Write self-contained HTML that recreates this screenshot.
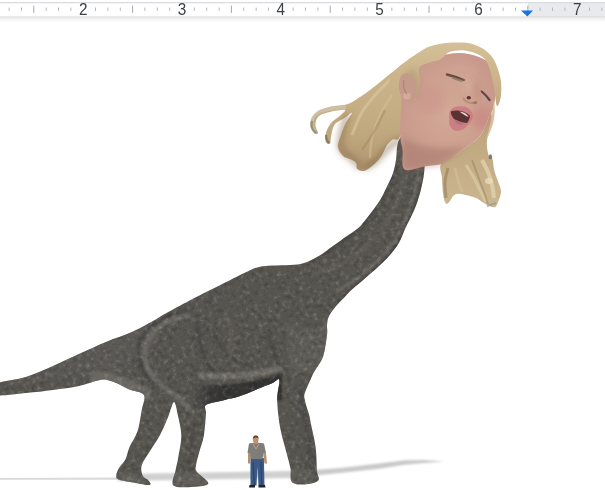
<!DOCTYPE html>
<html><head><meta charset="utf-8"><style>
html,body{margin:0;padding:0;background:#fff;width:605px;height:490px;overflow:hidden}
svg{display:block;font-family:"Liberation Sans",sans-serif}
</style></head><body>
<svg width="605" height="490" viewBox="0 0 605 490">
<defs>
<linearGradient id="dinoG" x1="0" y1="0" x2="0" y2="1">
<stop offset="0" stop-color="#6a6a68"/><stop offset="0.6" stop-color="#5a5a58"/><stop offset="1" stop-color="#4a4a48"/>
</linearGradient>
<linearGradient id="hairLG" x1="0" y1="0" x2="0" y2="1">
<stop offset="0" stop-color="#cdb68e"/><stop offset="0.6" stop-color="#c2aa80"/><stop offset="1" stop-color="#b09670"/>
</linearGradient>
<linearGradient id="shadeG" x1="0" y1="0" x2="0" y2="1">
<stop offset="0" stop-color="#ededed"/><stop offset="1" stop-color="#ffffff"/>
</linearGradient>
<linearGradient id="bellyG" gradientUnits="userSpaceOnUse" x1="192" y1="0" x2="282" y2="0">
<stop offset="0" stop-color="#333231" stop-opacity="0"/><stop offset="0.25" stop-color="#383736" stop-opacity="1"/><stop offset="1" stop-color="#30302f"/>
</linearGradient>
<linearGradient id="hairTG" x1="0" y1="0" x2="0" y2="1">
<stop offset="0" stop-color="#d4c098"/><stop offset="1" stop-color="#c4a880"/>
</linearGradient>
<linearGradient id="hairRG" x1="0" y1="0" x2="0" y2="1">
<stop offset="0" stop-color="#bca27a"/><stop offset="1" stop-color="#cbb690"/>
</linearGradient>
<radialGradient id="faceG" cx="0.5" cy="0.5" r="0.6">
<stop offset="0" stop-color="#d4a996"/><stop offset="1" stop-color="#c6978a"/>
</radialGradient>
<filter id="soft" x="-5%" y="-5%" width="110%" height="110%"><feGaussianBlur stdDeviation="0.6"/></filter>
<filter id="tex" x="0" y="0" width="100%" height="100%">
<feTurbulence type="fractalNoise" baseFrequency="0.22" numOctaves="3" seed="7" result="n"/>
<feColorMatrix in="n" type="matrix" values="0 0 0 0 1  0 0 0 0 1  0 0 0 0 0.98  3 0 0 0 -1.65" result="w"/>
<feColorMatrix in="n" type="matrix" values="0 0 0 0 0  0 0 0 0 0  0 0 0 0 0  -3 0 0 0 1.35" result="b"/>
<feMerge><feMergeNode in="b"/><feMergeNode in="w"/></feMerge>
</filter>
<filter id="blur2" x="-10%" y="-10%" width="120%" height="120%"><feGaussianBlur stdDeviation="1.2"/></filter>
<filter id="blur3" x="-20%" y="-20%" width="140%" height="140%"><feGaussianBlur stdDeviation="0.7"/></filter>
<filter id="blur4" x="-50%" y="-50%" width="200%" height="200%"><feGaussianBlur stdDeviation="3"/></filter>
<filter id="noop"><feColorMatrix type="identity"/></filter>
<filter id="blur1" x="-5%" y="-50%" width="110%" height="200%"><feGaussianBlur stdDeviation="1"/></filter>
</defs>
<g filter="url(#soft)">
<path d="M0 478 L120 477.5 L120 479.8 L0 479.8Z" fill="#d9d9d9"/>
<path d="M118 474 L316 470.5 L316 477.5 L118 481Z" fill="#d0d0d0" filter="url(#blur1)"/>
<path d="M300 471 L340 468 L379 463.5 L405 460.3 L425 460 L444 461.4 L425 463 L405 464.8 L379 468.8 L340 473 L300 477Z" fill="#c9c9c9" filter="url(#blur1)"/>
<clipPath id="dclip"><path d="M-4.0 384.0 C1.0 381.0 16.5 380.0 26.0 377.0 C35.5 374.0 44.2 369.8 53.0 366.0 C61.8 362.2 70.2 358.0 79.0 354.0 C87.8 350.0 97.2 345.7 106.0 342.0 C114.8 338.3 124.2 335.5 132.0 332.0 C139.8 328.5 147.2 324.2 153.0 321.0 C158.8 317.8 159.8 316.7 166.5 313.0 C173.2 309.3 184.2 303.3 193.0 298.7 C201.8 294.1 210.6 289.8 219.4 285.4 C228.2 281.0 239.2 275.3 245.8 272.2 C252.4 269.1 254.6 268.1 259.0 267.0 C263.4 265.9 266.8 265.9 272.0 265.6 C277.2 265.3 284.7 265.4 290.0 265.0 C295.3 264.6 299.2 264.5 304.0 263.0 C308.8 261.5 314.2 258.8 319.0 256.0 C323.8 253.2 328.3 249.3 333.0 246.0 C337.7 242.7 342.8 239.0 347.0 236.0 C351.2 233.0 355.1 231.0 358.4 228.0 C361.7 225.0 364.4 221.3 367.0 218.0 C369.6 214.7 372.0 211.5 374.3 208.4 C376.6 205.3 379.0 201.8 380.6 199.2 C382.2 196.6 382.8 195.1 384.0 192.7 C385.2 190.2 386.7 187.3 388.0 184.5 C389.3 181.7 390.9 178.8 392.0 176.0 C393.1 173.2 393.8 170.7 394.5 168.0 C395.2 165.3 395.2 164.7 396.0 160.0 C396.8 155.3 396.3 145.0 399.0 140.0 C401.7 135.0 407.7 128.3 412.0 130.0 C416.3 131.7 422.9 144.0 425.0 150.0 C427.1 156.0 424.9 161.5 424.7 166.0 C424.4 170.5 424.1 173.2 423.5 177.0 C422.9 180.8 421.7 186.0 421.0 189.0 C420.3 192.0 420.1 192.7 419.4 195.0 C418.7 197.3 417.8 200.3 416.9 203.0 C415.9 205.7 414.9 208.2 413.7 211.0 C412.5 213.8 411.0 216.7 409.6 219.5 C408.2 222.3 407.3 223.8 405.5 227.7 C403.7 231.6 401.6 238.2 398.8 242.9 C396.1 247.6 392.5 251.8 389.0 255.9 C385.5 260.0 381.7 263.5 377.6 267.3 C373.5 271.1 368.6 275.2 364.5 278.8 C360.4 282.4 356.3 285.6 353.0 288.6 C349.7 291.6 347.7 293.8 344.9 296.7 C342.1 299.6 338.6 302.8 336.0 306.0 C333.4 309.2 330.5 312.8 329.0 316.0 C327.5 319.2 327.3 321.8 327.0 325.0 C326.7 328.2 327.7 329.7 327.0 335.0 C326.3 340.3 325.0 350.9 322.9 357.0 C320.8 363.1 316.4 367.6 314.3 371.4 C312.2 375.2 311.6 377.2 310.4 380.0 C309.1 382.8 307.8 385.5 306.8 388.0 C305.8 390.5 304.6 393.0 304.3 395.0 C304.0 397.0 304.4 397.9 304.8 400.0 C305.2 402.1 306.0 405.0 306.8 407.6 C307.6 410.2 308.7 413.0 309.4 415.7 C310.1 418.4 310.0 418.8 311.0 424.0 C312.0 429.2 314.6 439.2 315.6 447.0 C316.6 454.8 316.6 465.4 317.0 471.0 C317.4 476.6 320.3 478.2 318.3 480.5 C316.3 482.8 309.4 484.3 305.0 484.5 C300.6 484.7 294.2 484.5 291.8 481.9 C289.4 479.2 291.4 473.5 290.5 468.6 C289.6 463.7 288.3 459.8 286.5 452.7 C284.7 445.6 281.4 435.0 279.9 426.2 C278.3 417.4 277.3 407.4 277.2 399.7 C277.1 392.0 280.1 382.8 279.3 380.0 C278.5 377.2 276.5 381.4 272.6 383.0 C268.7 384.6 261.5 387.5 256.0 389.7 C250.5 391.9 245.1 394.5 239.6 396.3 C234.1 398.1 228.6 398.9 223.0 400.4 C217.4 401.8 208.8 402.8 206.0 405.0 C203.2 407.2 206.4 408.5 206.0 413.7 C205.6 418.9 204.9 429.6 203.8 436.0 C202.7 442.4 200.6 447.1 199.3 452.0 C198.0 456.9 196.4 462.1 196.0 465.4 C195.6 468.7 194.9 469.0 197.0 472.0 C199.1 475.0 208.9 480.9 208.3 483.4 C207.8 485.8 199.5 486.3 193.7 486.7 C187.9 487.1 176.5 488.4 173.5 485.6 C170.5 482.8 174.9 474.5 175.7 470.0 C176.4 465.5 177.1 464.4 178.0 458.7 C178.9 453.0 181.3 443.1 181.3 436.0 C181.3 428.9 179.2 421.7 178.0 416.0 C176.8 410.3 175.6 401.9 174.0 402.0 C172.4 402.1 170.6 411.0 168.3 416.5 C166.0 422.0 163.1 429.2 160.0 435.0 C156.9 440.8 153.1 445.9 150.0 451.0 C146.9 456.1 142.9 461.4 141.7 465.5 C140.5 469.6 141.8 473.3 142.8 475.7 C143.8 478.1 146.7 478.3 147.9 479.8 C149.1 481.3 152.0 484.4 149.9 484.9 C147.8 485.4 140.7 483.8 135.6 482.9 C130.5 482.0 122.5 481.0 119.3 479.8 C116.1 478.6 116.2 477.7 116.2 475.7 C116.2 473.7 117.8 470.3 119.3 467.6 C120.8 464.9 123.7 462.8 125.4 459.4 C127.1 456.0 127.5 451.8 129.5 447.0 C131.6 442.2 135.7 437.0 137.7 430.8 C139.7 424.6 140.6 416.0 141.7 410.0 C142.8 404.0 145.9 398.4 144.0 395.0 C142.1 391.6 134.0 391.4 130.0 389.7 C126.0 388.0 123.3 386.2 120.0 384.7 C116.7 383.2 113.3 381.6 110.0 380.8 C106.7 380.0 105.2 379.1 100.0 380.0 C94.8 380.9 86.8 384.3 79.0 386.0 C71.2 387.7 61.8 388.8 53.0 390.0 C44.2 391.2 35.5 392.2 26.0 393.0 C16.5 393.8 1.0 396.5 -4.0 395.0 C-9.0 393.5 -9.0 387.0 -4.0 384.0Z"/></clipPath>
<path d="M-4.0 384.0 C1.0 381.0 16.5 380.0 26.0 377.0 C35.5 374.0 44.2 369.8 53.0 366.0 C61.8 362.2 70.2 358.0 79.0 354.0 C87.8 350.0 97.2 345.7 106.0 342.0 C114.8 338.3 124.2 335.5 132.0 332.0 C139.8 328.5 147.2 324.2 153.0 321.0 C158.8 317.8 159.8 316.7 166.5 313.0 C173.2 309.3 184.2 303.3 193.0 298.7 C201.8 294.1 210.6 289.8 219.4 285.4 C228.2 281.0 239.2 275.3 245.8 272.2 C252.4 269.1 254.6 268.1 259.0 267.0 C263.4 265.9 266.8 265.9 272.0 265.6 C277.2 265.3 284.7 265.4 290.0 265.0 C295.3 264.6 299.2 264.5 304.0 263.0 C308.8 261.5 314.2 258.8 319.0 256.0 C323.8 253.2 328.3 249.3 333.0 246.0 C337.7 242.7 342.8 239.0 347.0 236.0 C351.2 233.0 355.1 231.0 358.4 228.0 C361.7 225.0 364.4 221.3 367.0 218.0 C369.6 214.7 372.0 211.5 374.3 208.4 C376.6 205.3 379.0 201.8 380.6 199.2 C382.2 196.6 382.8 195.1 384.0 192.7 C385.2 190.2 386.7 187.3 388.0 184.5 C389.3 181.7 390.9 178.8 392.0 176.0 C393.1 173.2 393.8 170.7 394.5 168.0 C395.2 165.3 395.2 164.7 396.0 160.0 C396.8 155.3 396.3 145.0 399.0 140.0 C401.7 135.0 407.7 128.3 412.0 130.0 C416.3 131.7 422.9 144.0 425.0 150.0 C427.1 156.0 424.9 161.5 424.7 166.0 C424.4 170.5 424.1 173.2 423.5 177.0 C422.9 180.8 421.7 186.0 421.0 189.0 C420.3 192.0 420.1 192.7 419.4 195.0 C418.7 197.3 417.8 200.3 416.9 203.0 C415.9 205.7 414.9 208.2 413.7 211.0 C412.5 213.8 411.0 216.7 409.6 219.5 C408.2 222.3 407.3 223.8 405.5 227.7 C403.7 231.6 401.6 238.2 398.8 242.9 C396.1 247.6 392.5 251.8 389.0 255.9 C385.5 260.0 381.7 263.5 377.6 267.3 C373.5 271.1 368.6 275.2 364.5 278.8 C360.4 282.4 356.3 285.6 353.0 288.6 C349.7 291.6 347.7 293.8 344.9 296.7 C342.1 299.6 338.6 302.8 336.0 306.0 C333.4 309.2 330.5 312.8 329.0 316.0 C327.5 319.2 327.3 321.8 327.0 325.0 C326.7 328.2 327.7 329.7 327.0 335.0 C326.3 340.3 325.0 350.9 322.9 357.0 C320.8 363.1 316.4 367.6 314.3 371.4 C312.2 375.2 311.6 377.2 310.4 380.0 C309.1 382.8 307.8 385.5 306.8 388.0 C305.8 390.5 304.6 393.0 304.3 395.0 C304.0 397.0 304.4 397.9 304.8 400.0 C305.2 402.1 306.0 405.0 306.8 407.6 C307.6 410.2 308.7 413.0 309.4 415.7 C310.1 418.4 310.0 418.8 311.0 424.0 C312.0 429.2 314.6 439.2 315.6 447.0 C316.6 454.8 316.6 465.4 317.0 471.0 C317.4 476.6 320.3 478.2 318.3 480.5 C316.3 482.8 309.4 484.3 305.0 484.5 C300.6 484.7 294.2 484.5 291.8 481.9 C289.4 479.2 291.4 473.5 290.5 468.6 C289.6 463.7 288.3 459.8 286.5 452.7 C284.7 445.6 281.4 435.0 279.9 426.2 C278.3 417.4 277.3 407.4 277.2 399.7 C277.1 392.0 280.1 382.8 279.3 380.0 C278.5 377.2 276.5 381.4 272.6 383.0 C268.7 384.6 261.5 387.5 256.0 389.7 C250.5 391.9 245.1 394.5 239.6 396.3 C234.1 398.1 228.6 398.9 223.0 400.4 C217.4 401.8 208.8 402.8 206.0 405.0 C203.2 407.2 206.4 408.5 206.0 413.7 C205.6 418.9 204.9 429.6 203.8 436.0 C202.7 442.4 200.6 447.1 199.3 452.0 C198.0 456.9 196.4 462.1 196.0 465.4 C195.6 468.7 194.9 469.0 197.0 472.0 C199.1 475.0 208.9 480.9 208.3 483.4 C207.8 485.8 199.5 486.3 193.7 486.7 C187.9 487.1 176.5 488.4 173.5 485.6 C170.5 482.8 174.9 474.5 175.7 470.0 C176.4 465.5 177.1 464.4 178.0 458.7 C178.9 453.0 181.3 443.1 181.3 436.0 C181.3 428.9 179.2 421.7 178.0 416.0 C176.8 410.3 175.6 401.9 174.0 402.0 C172.4 402.1 170.6 411.0 168.3 416.5 C166.0 422.0 163.1 429.2 160.0 435.0 C156.9 440.8 153.1 445.9 150.0 451.0 C146.9 456.1 142.9 461.4 141.7 465.5 C140.5 469.6 141.8 473.3 142.8 475.7 C143.8 478.1 146.7 478.3 147.9 479.8 C149.1 481.3 152.0 484.4 149.9 484.9 C147.8 485.4 140.7 483.8 135.6 482.9 C130.5 482.0 122.5 481.0 119.3 479.8 C116.1 478.6 116.2 477.7 116.2 475.7 C116.2 473.7 117.8 470.3 119.3 467.6 C120.8 464.9 123.7 462.8 125.4 459.4 C127.1 456.0 127.5 451.8 129.5 447.0 C131.6 442.2 135.7 437.0 137.7 430.8 C139.7 424.6 140.6 416.0 141.7 410.0 C142.8 404.0 145.9 398.4 144.0 395.0 C142.1 391.6 134.0 391.4 130.0 389.7 C126.0 388.0 123.3 386.2 120.0 384.7 C116.7 383.2 113.3 381.6 110.0 380.8 C106.7 380.0 105.2 379.1 100.0 380.0 C94.8 380.9 86.8 384.3 79.0 386.0 C71.2 387.7 61.8 388.8 53.0 390.0 C44.2 391.2 35.5 392.2 26.0 393.0 C16.5 393.8 1.0 396.5 -4.0 395.0 C-9.0 393.5 -9.0 387.0 -4.0 384.0Z" fill="#57544f" />
<g clip-path="url(#dclip)"><g filter="url(#blur2)">
<path d="M-5 372 L150 322 L160 340 L120 372 L-5 386Z" fill="#5f5d59" opacity="0.5"/>
<path d="M90 372 C110 370 135 378 152 390 L150 400 L90 400Z" fill="#72706b" opacity="0.7"/>
<path d="M188.0 310.0 C183.7 311.5 169.3 315.0 162.0 319.0 C154.7 323.0 148.0 328.5 144.0 334.0 C140.0 339.5 138.3 346.3 138.0 352.0 C137.7 357.7 140.0 363.3 142.0 368.0 C144.0 372.7 146.2 376.0 150.0 380.0 C153.8 384.0 162.5 390.0 165.0 392.0" stroke="#3c3b39" stroke-width="3" fill="none" opacity="0.55"/>
<path d="M190.0 315.0 C185.8 316.3 171.7 319.3 165.0 323.0 C158.3 326.7 153.3 331.8 150.0 337.0 C146.7 342.2 145.0 348.2 145.0 354.0 C145.0 359.8 147.2 366.7 150.0 372.0 C152.8 377.3 157.7 382.0 162.0 386.0 C166.3 390.0 171.3 392.0 176.0 396.0 C180.7 400.0 187.7 407.7 190.0 410.0" stroke="#7c7a75" stroke-width="5" fill="none" opacity="0.6"/>
<path d="M197.0 322.0 C198.0 327.7 200.2 347.5 203.0 356.0 C205.8 364.5 212.2 370.2 214.0 373.0" stroke="#3e3d3b" stroke-width="3" fill="none" opacity="0.5"/>
<path d="M205.0 328.0 C206.5 329.0 210.2 329.3 214.0 334.0 C217.8 338.7 222.3 350.8 228.0 356.0 C233.7 361.2 244.7 363.5 248.0 365.0" stroke="#3e3d3b" stroke-width="2.5" fill="none" opacity="0.4"/>
<path d="M226 310 C230 325 232 340 230 360" stroke="#6e6c68" stroke-width="3" fill="none" opacity="0.45"/>
<path d="M267.0 331.0 C268.3 335.0 272.8 346.8 275.0 355.0 C277.2 363.2 279.2 375.8 280.0 380.0" stroke="#3e3d3b" stroke-width="3" fill="none" opacity="0.45"/>
<path d="M285 320 C300 330 320 330 332 322 L330 370 L290 375Z" fill="#66645f" opacity="0.45"/>
<path d="M198 375 C225 378 252 376 282 368" stroke="#7e7c77" stroke-width="6" fill="none" opacity="0.65"/>
<path d="M192 384 C225 388 255 382 282 374 L282 400 L192 410Z" fill="url(#bellyG)"/>
<path d="M335 305 C328 318 327 330 327 340" stroke="#77756f" stroke-width="4" fill="none" opacity="0.45"/>
<path d="M418.0 172.0 C417.3 175.8 416.0 187.3 414.0 195.0 C412.0 202.7 409.5 210.0 406.0 218.0 C402.5 226.0 398.0 235.7 393.0 243.0 C388.0 250.3 382.2 256.0 376.0 262.0 C369.8 268.0 362.7 274.0 356.0 279.0 C349.3 284.0 339.3 289.8 336.0 292.0" stroke="#7c7a75" stroke-width="2.2" fill="none" opacity="0.7"/>
<path d="M426.0 172.0 C425.2 175.3 423.2 185.3 421.0 192.0 C418.8 198.7 416.0 205.0 413.0 212.0 C410.0 219.0 407.0 226.7 403.0 234.0 C399.0 241.3 395.4 248.5 389.0 256.0 C382.6 263.5 371.9 272.2 364.5 279.0 C357.1 285.8 350.8 290.8 344.9 297.0 C339.0 303.2 331.6 312.8 329.0 316.0" stroke="#3a3937" stroke-width="3" fill="none" opacity="0.6"/>
<path d="M396.0 162.0 C395.0 165.3 392.8 175.2 390.0 182.0 C387.2 188.8 383.7 195.8 379.0 203.0 C374.3 210.2 368.5 218.3 362.0 225.0 C355.5 231.7 348.7 237.0 340.0 243.0 C331.3 249.0 315.0 258.0 310.0 261.0" stroke="#3e3d3a" stroke-width="4" fill="none" opacity="0.45"/>
<path d="M405.0 175.0 C403.8 179.2 401.3 191.7 398.0 200.0 C394.7 208.3 390.5 217.0 385.0 225.0 C379.5 233.0 372.5 241.3 365.0 248.0 C357.5 254.7 349.2 260.5 340.0 265.0 C330.8 269.5 315.0 273.3 310.0 275.0" stroke="#696763" stroke-width="6" fill="none" opacity="0.35"/>
<path d="M300 385 C304 420 310 445 312 475" stroke="#484745" stroke-width="5" fill="none" opacity="0.5"/>
<path d="M195 420 C192 440 188 455 190 475" stroke="#484745" stroke-width="4" fill="none" opacity="0.4"/>
<path d="M116 475 C125 470 140 472 150 485 L116 485Z" fill="#6a6864" opacity="0.5"/>
<path d="M173 472 C185 468 200 472 209 484 L173 486Z" fill="#6a6864" opacity="0.5"/>
<path d="M291 470 C300 466 312 468 318 480 L291 484Z" fill="#6a6864" opacity="0.45"/>
</g>
<rect x="0" y="150" width="605" height="340" filter="url(#tex)" opacity="0.18"/>
</g>
<path d="M414.0 66.0 C414.0 59.7 409.2 61.2 406.0 62.0 C402.8 62.8 398.5 67.5 394.5 70.6 C390.5 73.7 386.1 77.2 382.0 80.4 C377.9 83.6 373.7 87.2 370.0 90.0 C366.3 92.8 363.7 94.7 360.0 97.0 C356.3 99.3 352.8 102.3 348.0 103.9 C343.2 105.5 335.9 105.3 331.0 106.5 C326.1 107.7 322.1 108.9 318.9 110.8 C315.7 112.7 313.4 115.1 312.0 117.7 C310.6 120.3 309.8 123.8 310.2 126.4 C310.6 129.0 313.2 132.2 314.5 133.3 C315.8 134.4 317.9 134.4 318.0 133.0 C318.1 131.6 315.2 127.5 315.4 124.7 C315.5 121.9 316.3 118.2 318.9 116.0 C321.5 113.8 326.6 112.7 331.0 111.7 C335.4 110.7 343.6 109.3 345.0 110.0 C346.4 110.7 342.0 113.8 339.7 116.0 C337.4 118.2 333.3 120.0 331.0 122.9 C328.7 125.8 326.7 130.1 325.8 133.3 C324.9 136.5 325.1 140.3 325.8 142.0 C326.5 143.7 329.1 144.6 330.0 143.7 C330.9 142.8 330.2 140.0 331.0 136.8 C331.8 133.6 332.2 127.9 334.5 124.7 C336.8 121.5 342.0 119.7 344.9 117.7 C347.8 115.8 351.8 111.8 351.8 113.0 C351.8 114.2 346.9 120.5 344.9 124.7 C342.9 128.9 340.9 134.8 339.7 138.5 C338.5 142.2 337.3 144.3 337.9 147.2 C338.4 150.1 341.0 153.9 343.0 155.9 C345.0 157.9 347.8 157.8 350.0 159.0 C352.2 160.2 354.8 161.1 356.0 162.8 C357.2 164.5 355.9 167.7 357.3 169.0 C358.8 170.3 361.8 171.6 364.7 170.8 C367.6 170.0 371.6 166.6 374.5 164.0 C377.4 161.4 379.8 158.6 381.8 155.5 C383.8 152.4 384.9 148.3 386.7 145.7 C388.5 143.0 390.6 141.2 392.8 139.6 C395.1 138.0 398.0 142.6 400.2 136.0 C402.4 129.4 403.7 111.7 406.0 100.0 C408.3 88.3 414.0 72.3 414.0 66.0Z" fill="url(#hairLG)" />
<g filter="url(#blur3)">
<path d="M348.0 114.0 C347.0 117.2 343.2 127.3 342.0 133.0 C340.8 138.7 339.8 144.2 341.0 148.0 C342.2 151.8 346.3 153.5 349.0 156.0 C351.7 158.5 355.2 161.0 357.0 163.0 C358.8 165.0 359.5 167.2 360.0 168.0" stroke="#8a7050" stroke-width="6" fill="none" opacity="0.6" filter="url(#blur4)"/>
<path d="M364.0 168.0 C366.0 166.8 372.7 163.7 376.0 161.0 C379.3 158.3 381.2 154.8 384.0 152.0 C386.8 149.2 390.3 146.2 393.0 144.0 C395.7 141.8 398.8 139.8 400.0 139.0" stroke="#7a6242" stroke-width="5" fill="none" opacity="0.6" filter="url(#blur4)"/>
<path d="M398.0 72.0 C394.7 75.3 384.0 85.3 378.0 92.0 C372.0 98.7 366.3 104.8 362.0 112.0 C357.7 119.2 353.7 131.2 352.0 135.0" stroke="#dccaa2" stroke-width="3" fill="none" opacity="0.55"/>
<path d="M392.0 95.0 C390.0 98.3 383.3 107.8 380.0 115.0 C376.7 122.2 373.7 130.8 372.0 138.0 C370.3 145.2 370.3 154.7 370.0 158.0" stroke="#d6c298" stroke-width="2.5" fill="none" opacity="0.5"/>
<path d="M385.0 110.0 C383.3 113.3 378.8 123.3 375.0 130.0 C371.2 136.7 364.2 146.7 362.0 150.0" stroke="#a08660" stroke-width="2.5" fill="none" opacity="0.45"/>
</g>
<path d="M346.0 107.0 C343.3 107.3 334.5 108.2 330.0 109.0 C325.5 109.8 321.8 110.5 319.0 112.0 C316.2 113.5 314.2 115.7 313.0 118.0 C311.8 120.3 311.7 123.7 312.0 126.0 C312.3 128.3 314.5 131.0 315.0 132.0" stroke="#cfc8b0" stroke-width="3.5" fill="none" opacity="0.7"/>
<path d="M312 121 C311 126 312 130 316 133" stroke="#7e7a6a" stroke-width="2" fill="none" opacity="0.7"/>
<path d="M326 135 C326 139 327 141 329 143" stroke="#6e6a5a" stroke-width="2" fill="none" opacity="0.7"/>
<path d="M441.0 164.0 C443.2 160.2 450.8 158.2 455.5 155.0 C460.2 151.8 465.1 147.9 469.0 145.0 C472.9 142.1 476.2 140.4 478.8 137.5 C481.4 134.6 483.0 131.1 484.6 127.8 C486.2 124.5 487.4 120.6 488.5 118.0 C489.6 115.4 490.4 110.8 491.0 112.0 C491.6 113.2 492.7 120.3 492.0 125.0 C491.3 129.7 487.6 135.0 487.0 140.0 C486.4 145.0 487.6 151.9 488.5 155.0 C489.4 158.1 491.4 156.2 492.4 158.8 C493.4 161.4 493.3 166.5 494.3 170.4 C495.3 174.3 497.1 178.4 498.2 182.0 C499.3 185.6 501.0 188.5 501.0 191.7 C501.0 194.9 499.3 198.8 498.2 201.4 C497.1 204.0 496.6 207.0 494.3 207.3 C492.0 207.6 487.8 205.0 484.6 203.4 C481.4 201.8 479.1 199.2 474.9 197.6 C470.7 196.0 462.9 194.0 459.4 193.7 C455.8 193.4 455.2 194.3 453.6 195.6 C452.0 196.9 451.0 200.1 449.7 201.4 C448.4 202.7 446.9 204.7 445.8 203.4 C444.7 202.1 443.6 197.9 443.0 193.7 C442.4 189.5 442.3 182.9 442.0 178.0 C441.7 173.1 438.8 167.8 441.0 164.0Z" fill="url(#hairRG)" />
<g filter="url(#blur3)">
<path d="M482.0 160.0 C483.0 162.0 486.3 167.8 488.0 172.0 C489.7 176.2 491.0 180.7 492.0 185.0 C493.0 189.3 493.7 195.8 494.0 198.0" stroke="#e4d6b0" stroke-width="4" fill="none" opacity="0.7"/>
<path d="M466.0 165.0 C467.3 167.2 471.7 173.8 474.0 178.0 C476.3 182.2 478.0 186.0 480.0 190.0 C482.0 194.0 485.0 200.0 486.0 202.0" stroke="#ddd0a8" stroke-width="3" fill="none" opacity="0.6"/>
<path d="M455.0 168.0 C455.5 170.0 456.8 176.0 458.0 180.0 C459.2 184.0 461.3 190.0 462.0 192.0" stroke="#d4c29a" stroke-width="3" fill="none" opacity="0.5"/>
<path d="M448.0 168.0 C447.5 170.3 445.3 177.0 445.0 182.0 C444.7 187.0 445.8 195.3 446.0 198.0" stroke="#8e7456" stroke-width="3" fill="none" opacity="0.5"/>
<path d="M472.0 160.0 C473.0 162.7 476.0 170.7 478.0 176.0 C480.0 181.3 482.3 187.3 484.0 192.0 C485.7 196.7 487.3 202.0 488.0 204.0" stroke="#9c8260" stroke-width="2" fill="none" opacity="0.5"/>
<ellipse cx="489" cy="181" rx="4" ry="3" fill="#ece0c0" opacity="0.7"/>
</g>
<ellipse cx="490.4" cy="156.7" rx="1.8" ry="2.5" fill="#6a6660" opacity="0.8"/>
<path d="M487 206 L496 203" stroke="#9a9ca0" stroke-width="2" opacity="0.8"/>
<path d="M412.0 66.0 C417.3 62.2 427.2 59.2 435.0 57.0 C442.8 54.8 451.7 53.0 459.0 53.0 C466.3 53.0 473.5 54.8 479.0 57.0 C484.5 59.2 489.2 61.8 492.0 66.0 C494.8 70.2 495.7 75.3 496.0 82.0 C496.3 88.7 495.2 100.0 494.0 106.0 C492.8 112.0 490.1 114.4 488.5 118.0 C486.9 121.6 486.2 124.5 484.6 127.8 C483.0 131.1 481.4 134.6 478.8 137.5 C476.2 140.4 472.9 142.3 469.0 145.2 C465.1 148.1 459.4 152.2 455.5 155.0 C451.6 157.8 448.4 160.1 445.8 161.7 C443.2 163.3 443.4 163.8 440.0 164.6 C436.6 165.4 431.2 165.5 425.3 166.3 C419.4 167.1 408.3 172.1 404.5 169.4 C400.7 166.7 403.3 155.6 402.6 150.0 C401.9 144.4 400.5 142.7 400.2 136.0 C399.9 129.3 400.5 119.3 401.0 110.0 C401.5 100.7 401.2 87.3 403.0 80.0 C404.8 72.7 406.7 69.8 412.0 66.0Z" fill="url(#faceG)" />
<path d="M403 138 C418 146 440 152 466 146 C455 156 445 162 438 165 L404.5 169.4 L402.6 150Z" fill="#a07468" opacity="0.5" filter="url(#blur4)"/>
<path d="M392.0 74.0 C394.8 70.0 402.2 64.4 406.7 60.8 C411.2 57.2 414.9 54.7 419.0 52.2 C423.1 49.7 426.0 47.6 431.0 46.0 C436.0 44.4 442.1 43.1 449.0 42.7 C455.9 42.4 465.6 41.8 472.6 43.9 C479.6 46.0 486.4 50.1 491.0 55.5 C495.6 60.9 498.3 69.7 500.0 76.3 C501.7 82.9 501.5 90.0 501.0 95.0 C500.5 100.0 498.2 107.2 497.0 106.0 C495.8 104.8 495.2 94.0 494.0 88.0 C492.8 82.0 491.9 75.2 490.0 70.0 C488.1 64.8 486.8 60.2 482.6 57.0 C478.4 53.8 470.5 51.3 465.0 50.5 C459.5 49.7 453.8 50.5 449.6 52.0 C445.4 53.5 443.6 57.8 440.0 59.6 C436.4 61.4 431.5 61.6 428.0 63.0 C424.5 64.4 420.3 65.2 419.0 68.0 C417.7 70.8 420.2 76.0 420.0 80.0 C419.8 84.0 419.0 88.5 418.0 92.0 C417.0 95.5 416.2 101.3 414.0 101.0 C411.8 100.7 407.7 93.5 405.0 90.0 C402.3 86.5 400.5 80.8 398.0 80.0 C395.5 79.2 391.0 86.0 390.0 85.0 C389.0 84.0 389.2 78.0 392.0 74.0Z" fill="url(#hairTG)" />
<path d="M494 100 C497 115 492 130 486 140 C490 128 492 115 494 100Z" fill="#d9c8a6"/>
<path d="M414 68 C419 74 420 85 418 95 C416 100 413 102 411 101 L405 74Z" fill="#a08868" opacity="0.4" filter="url(#blur4)"/>
<path d="M402 75 C398 80 398 90 401 95 C403 99 406 102 410 101.5 C414 100 416 95 415.5 88 C415 80 412 74 407 73 C405 73 403 74 402 75Z" fill="#c49a8a" filter="url(#blur3)"/>
<ellipse cx="407" cy="96" rx="4" ry="3.5" fill="#d4aa9a" filter="url(#blur3)"/>
<path d="M404 80 C403 86 404 91 407 94" stroke="#a07868" stroke-width="1.2" fill="none" opacity="0.6"/>
<ellipse cx="481" cy="118" rx="10" ry="11" fill="#c87a7c" opacity="0.45" filter="url(#blur4)"/>
<ellipse cx="432" cy="100" rx="14" ry="14" fill="#c98a88" opacity="0.3" filter="url(#blur4)"/>
<ellipse cx="462" cy="72" rx="16" ry="10" fill="#d4aa9c" opacity="0.35" filter="url(#blur4)"/>
<g filter="url(#blur3)">
<path d="M447 74.5 Q455 76.5 463.8 80" stroke="#6a4c42" stroke-width="2.4" fill="none" stroke-linecap="round"/>
<path d="M453 78 Q458 80 462 81" stroke="#857a6a" stroke-width="2" fill="none" stroke-linecap="round" opacity="0.8"/>
<path d="M481.7 91.5 Q486 95 489.6 100" stroke="#5e4448" stroke-width="2.2" fill="none" stroke-linecap="round"/>
<path d="M474 84 C478 90 480 96 478 102" stroke="#a87468" stroke-width="3" fill="none" opacity="0.4" filter="url(#blur4)"/>
<ellipse cx="468" cy="86" rx="4" ry="8" fill="#dcb6a4" opacity="0.5" filter="url(#blur4)"/>
<path d="M463 98 C466 103 472 104 477 102" stroke="#a87468" stroke-width="2" fill="none" opacity="0.55"/>
<ellipse cx="468.8" cy="97.7" rx="2.2" ry="1.8" fill="#5e3630"/>
<ellipse cx="475" cy="102.7" rx="2" ry="1.5" fill="#9a6a60" opacity="0.7"/>
<path d="M450 110.7 C453 107 457 106 460.7 106.4 C465 106 469 108 470.7 110.7 C472.5 113 473 115 472.9 116.4 C472 120 470 123 468.6 124.3 C466 127 464 129.5 461.4 130 C459 131 457 131 455.7 130.7 C453 130 451 128.5 450.7 127 C449 125 449 123 449.3 121.4 C449 117 449 113 450 110.7Z" fill="#cc7e82"/>
<path d="M450.7 111.4 C456 109.5 464 110 470 115.7 C469.5 119 468.5 121 467 122.9 C463 123 458 121 454.3 119.3 C452 117 451 114 450.7 111.4Z" fill="#5a3230"/>
<path d="M459.3 111.4 C463 111.5 467 113.5 468.6 117 C465 115.5 462 113.5 459.3 111.4Z" fill="#e6d6cc"/>
<path d="M454 120 C458 121.5 461 123 464 124.3 C460 125.5 456 124 454 120Z" fill="#a87080"/>
</g>
<path d="M250.4 458 L263.9 458 L264.5 485.5 L258.5 485.5 L257.5 467 L256.5 485.5 L250.5 485.5 Z" fill="#3d5a86"/>
<path d="M253 462 L254.5 485 M261 462 L261.5 485" stroke="#2c4468" stroke-width="1.2"/>
<path d="M249.5 485 L255 485 L255 487.5 L249 487.5Z M258.5 485 L265 485 L265.5 487.5 L258.5 487.5Z" fill="#222"/>
<path d="M249 443.5 C252 442.5 261 442.5 264 443.5 L266 453 L263.5 453 L262.5 459 L250.5 459 L249.5 453 L247.5 453 Z" fill="#7e7d7a"/>
<path d="M253 444 L256 449 L259 444" stroke="#c8a080" stroke-width="1" fill="none"/>
<path d="M248 453 L250.5 453 L250 463.5 L248 463.5Z M263 453 L266 453 L267 463.5 L264.5 463.5Z" fill="#b8906e"/>
<rect x="254" y="441" width="4" height="3" fill="#b8906e"/>
<ellipse cx="255.7" cy="439.5" rx="2.8" ry="4" fill="#c09070"/>
<path d="M252.9 439 C252.5 435 258.5 434 258.6 438.5 C257 437 254.5 437 252.9 439Z" fill="#5a4030"/>
</g>
<g filter="url(#noop)"><rect x="528" y="2" width="77" height="15" fill="#e8eaed"/>
<rect x="0" y="2" width="605" height="1.3" fill="#dadce0"/>
<rect x="0" y="17.5" width="605" height="5" fill="url(#shadeG)"/>
<rect x="0" y="16.4" width="605" height="1.2" fill="#dadce0"/>
<rect x="8.6" y="7.6" width="1" height="3.3" fill="#b4b8bc"/>
<rect x="21.0" y="7.6" width="1" height="3.3" fill="#b4b8bc"/>
<rect x="33.3" y="5.6" width="1" height="7.3" fill="#a4a8ac"/>
<rect x="45.7" y="7.6" width="1" height="3.3" fill="#b4b8bc"/>
<rect x="58.0" y="7.6" width="1" height="3.3" fill="#b4b8bc"/>
<rect x="70.4" y="7.6" width="1" height="3.3" fill="#b4b8bc"/>
<rect x="95.0" y="7.6" width="1" height="3.3" fill="#b4b8bc"/>
<rect x="107.4" y="7.6" width="1" height="3.3" fill="#b4b8bc"/>
<rect x="119.8" y="7.6" width="1" height="3.3" fill="#b4b8bc"/>
<rect x="132.1" y="5.6" width="1" height="7.3" fill="#a4a8ac"/>
<rect x="144.4" y="7.6" width="1" height="3.3" fill="#b4b8bc"/>
<rect x="156.8" y="7.6" width="1" height="3.3" fill="#b4b8bc"/>
<rect x="169.2" y="7.6" width="1" height="3.3" fill="#b4b8bc"/>
<rect x="193.8" y="7.6" width="1" height="3.3" fill="#b4b8bc"/>
<rect x="206.2" y="7.6" width="1" height="3.3" fill="#b4b8bc"/>
<rect x="218.6" y="7.6" width="1" height="3.3" fill="#b4b8bc"/>
<rect x="230.9" y="5.6" width="1" height="7.3" fill="#a4a8ac"/>
<rect x="243.2" y="7.6" width="1" height="3.3" fill="#b4b8bc"/>
<rect x="255.6" y="7.6" width="1" height="3.3" fill="#b4b8bc"/>
<rect x="267.9" y="7.6" width="1" height="3.3" fill="#b4b8bc"/>
<rect x="292.6" y="7.6" width="1" height="3.3" fill="#b4b8bc"/>
<rect x="305.0" y="7.6" width="1" height="3.3" fill="#b4b8bc"/>
<rect x="317.4" y="7.6" width="1" height="3.3" fill="#b4b8bc"/>
<rect x="329.7" y="5.6" width="1" height="7.3" fill="#a4a8ac"/>
<rect x="342.0" y="7.6" width="1" height="3.3" fill="#b4b8bc"/>
<rect x="354.4" y="7.6" width="1" height="3.3" fill="#b4b8bc"/>
<rect x="366.8" y="7.6" width="1" height="3.3" fill="#b4b8bc"/>
<rect x="391.4" y="7.6" width="1" height="3.3" fill="#b4b8bc"/>
<rect x="403.8" y="7.6" width="1" height="3.3" fill="#b4b8bc"/>
<rect x="416.1" y="7.6" width="1" height="3.3" fill="#b4b8bc"/>
<rect x="428.5" y="5.6" width="1" height="7.3" fill="#a4a8ac"/>
<rect x="440.8" y="7.6" width="1" height="3.3" fill="#b4b8bc"/>
<rect x="453.2" y="7.6" width="1" height="3.3" fill="#b4b8bc"/>
<rect x="465.5" y="7.6" width="1" height="3.3" fill="#b4b8bc"/>
<rect x="490.2" y="7.6" width="1" height="3.3" fill="#b4b8bc"/>
<rect x="502.6" y="7.6" width="1" height="3.3" fill="#b4b8bc"/>
<rect x="515.0" y="7.6" width="1" height="3.3" fill="#b4b8bc"/>
<rect x="527.3" y="5.6" width="1" height="7.3" fill="#a4a8ac"/>
<rect x="539.6" y="7.6" width="1" height="3.3" fill="#b4b8bc"/>
<rect x="552.0" y="7.6" width="1" height="3.3" fill="#b4b8bc"/>
<rect x="564.4" y="7.6" width="1" height="3.3" fill="#b4b8bc"/>
<rect x="589.0" y="7.6" width="1" height="3.3" fill="#b4b8bc"/>
<rect x="601.4" y="7.6" width="1" height="3.3" fill="#b4b8bc"/>
<text x="0" y="15" font-size="17" text-anchor="middle" fill="#3c4043" transform="translate(83.2 0) scale(0.9 1)">2</text>
<text x="0" y="15" font-size="17" text-anchor="middle" fill="#3c4043" transform="translate(182.0 0) scale(0.9 1)">3</text>
<text x="0" y="15" font-size="17" text-anchor="middle" fill="#3c4043" transform="translate(280.8 0) scale(0.9 1)">4</text>
<text x="0" y="15" font-size="17" text-anchor="middle" fill="#3c4043" transform="translate(379.6 0) scale(0.9 1)">5</text>
<text x="0" y="15" font-size="17" text-anchor="middle" fill="#3c4043" transform="translate(478.4 0) scale(0.9 1)">6</text>
<text x="0" y="15" font-size="17" text-anchor="middle" fill="#3c4043" transform="translate(577.2 0) scale(0.9 1)">7</text>
<path d="M521 10.5 L533 10.5 L527.3 16.5Z" fill="#1a73e8"/></g>
</svg>
</body></html>
